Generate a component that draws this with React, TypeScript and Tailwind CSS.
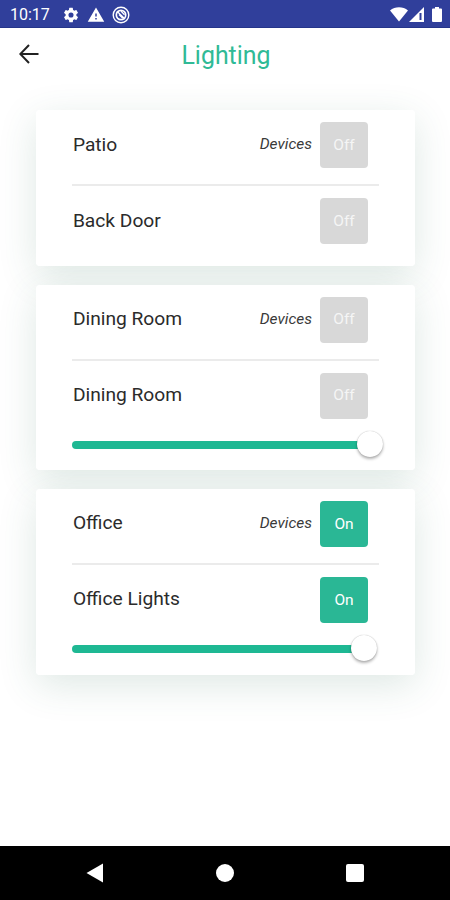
type Device = { name: string; on: boolean; link?: boolean };
type Room = { devices: Device[]; level?: number };

const rooms: Room[] = [
  { devices: [{ name: "Patio", on: false, link: true }, { name: "Back Door", on: false }] },
  { devices: [{ name: "Dining Room", on: false, link: true }, { name: "Dining Room", on: false }], level: 298 },
  { devices: [{ name: "Office", on: true, link: true }, { name: "Office Lights", on: true }], level: 292 },
];

function StatusBar() {
  return (
    <header className="flex h-7 shrink-0 items-center border-b border-[#25358a] bg-[#303f9b] pl-[10px] pr-[8px] pt-[2px] text-white">
      <span className="w-[52px] text-[16px] leading-none">10:17</span>
      <svg className="size-[18px]" viewBox="0 0 24 24" fill="currentColor">
        <path d="M19.14 12.94c.04-.3.06-.61.06-.94s-.02-.64-.07-.94l2.03-1.58a.5.5 0 0 0 .12-.61l-1.92-3.32a.5.5 0 0 0-.59-.22l-2.39.96a7 7 0 0 0-1.62-.94l-.36-2.54a.5.5 0 0 0-.48-.41h-3.84a.5.5 0 0 0-.47.41l-.36 2.54c-.59.24-1.13.57-1.62.94l-2.39-.96a.5.5 0 0 0-.59.22L2.74 8.87a.5.5 0 0 0 .12.61l2.03 1.58a6 6 0 0 0 0 1.88l-2.03 1.58a.5.5 0 0 0-.12.61l1.92 3.32c.12.22.37.29.59.22l2.39-.96c.5.38 1.03.7 1.62.94l.36 2.54c.05.24.24.41.48.41h3.84c.24 0 .44-.17.47-.41l.36-2.54c.59-.24 1.13-.56 1.62-.94l2.39.96c.22.08.47 0 .59-.22l1.92-3.32a.5.5 0 0 0-.12-.61zM12 15.4a3.4 3.4 0 1 1 0-6.8 3.4 3.4 0 0 1 0 6.8z" />
      </svg>
      <svg className="ml-[7px] size-[18px]" viewBox="0 0 24 24" fill="currentColor">
        <path d="M1 21h22L12 2 1 21zm12-3h-2v-2h2v2zm0-4h-2v-4h2v4z" />
      </svg>
      <svg className="ml-[7px] size-[18px]" viewBox="0 0 18 18" fill="none" stroke="currentColor">
        <circle cx="9" cy="9" r="7.8" strokeWidth="1.4" />
        <circle cx="9" cy="9" r="4.7" strokeWidth="1.7" />
        <path d="M5 5.2 13 13M7 8.5l3.8 3.8M9 5l3.5 3.7" strokeWidth="1.3" />
      </svg>
      <svg className="ml-auto h-[15px] w-[18px]" viewBox="0 0 18 15" fill="currentColor">
        <path d="M0 3.5C5-.8 13-.8 18 3.5L9 14.5z" />
      </svg>
      <svg className="ml-[1px] size-[15px]" viewBox="0 0 15 15">
        <path d="M0 15 15 0v15z" fill="currentColor" />
        <path d="M11.5 6v7" stroke="#303f9b" strokeWidth="2" />
      </svg>
      <svg className="ml-[8px] h-[15px] w-[10px]" viewBox="0 0 10 15" fill="currentColor">
        <path d="M3 0h4v1.5h2q1 0 1 1V14q0 1-1 1H1q-1 0-1-1V2.500q0-1 1-1h2z" />
      </svg>
    </header>
  );
}

function DeviceRow({ device }: { device: Device }) {
  return (
    <div className="flex h-[46px] items-center pr-[11px]">
      <span className="flex-1 pl-[0.5px] text-[19.200px] text-[#2b2b2b]">{device.name}</span>
      {device.link && <span className="mr-2 text-[15.500px] italic text-[#3a3a3a]">Devices</span>}
      <button
        className={
          device.on
            ? "h-[46px] w-12 rounded-[4px] bg-[#2ab795] pt-px text-[15.500px] text-white"
            : "h-[46px] w-12 rounded-[4px] bg-[#d8d8d8] pt-px text-[15.500px] text-[#f5f5f5]"
        }
      >
        {device.on ? "On" : "Off"}
      </button>
    </div>
  );
}

function LevelSlider({ level }: { level: number }) {
  return (
    <div className="-mt-[11px] flex h-[26px] items-center">
      <div className="h-2 shrink-0 rounded-l-full bg-[#1eb893]" style={{ width: level - 8 }} />
      <div className="relative -left-[5px] -top-[1px] size-[26px] shrink-0 rounded-full bg-white shadow-[0_2px_3px_rgba(0,0,0,0.3),0_0_1px_rgba(0,0,0,0.3)]" />
    </div>
  );
}

function RoomCard({ room }: { room: Room }) {
  return (
    <section className="rounded-[4px] shadow-[0_10px_38px_rgba(50,110,90,0.16)]">
      <div className="relative z-10 rounded-[4px] bg-white pl-[36.200px] pr-9 pt-3">
        <DeviceRow device={room.devices[0]} />
        <div className="mb-3 mt-4 h-[2px] bg-[#ebebeb]" />
        <DeviceRow device={room.devices[1]} />
        {room.level === undefined ? (
          <div className="h-[22px]" />
        ) : (
          <div className="h-[51.800px] pt-6">
            <LevelSlider level={room.level} />
          </div>
        )}
      </div>
    </section>
  );
}

export default function App() {
  return (
    <div className="flex h-[900px] w-[450px] flex-col overflow-hidden bg-white font-['Roboto',sans-serif]">
      <StatusBar />
      <div className="grid h-[54px] shrink-0 grid-cols-[54px_1fr_54px] items-center">
        <svg className="-mt-[2px] ml-[19px] size-[20px]" viewBox="0 0 20 20" fill="none" stroke="#222" strokeWidth="2">
          <path d="M19.500 10H1.500M10 1 1.300 10 10 19" />
        </svg>
        <h1 className="pl-[2px] pt-[1px] text-center text-[24.900px] font-normal text-[#30ba96]">Lighting</h1>
      </div>
      <main className="flex flex-1 flex-col gap-[18.500px] pl-[36.200px] pr-[35px] pt-7">
        {rooms.map((room, index) => (
          <RoomCard key={index} room={room} />
        ))}
      </main>
      <nav className="flex h-[54px] shrink-0 items-center justify-between bg-black pl-[86px] pr-[86px]">
        <svg className="h-5 w-[18px]" viewBox="0 0 18 20" fill="white">
          <path d="M17 0.500v19L.500 10z" />
        </svg>
        <span className="size-[18px] rounded-full bg-white" />
        <span className="size-[18px] rounded-[2px] bg-white" />
      </nav>
    </div>
  );
}
